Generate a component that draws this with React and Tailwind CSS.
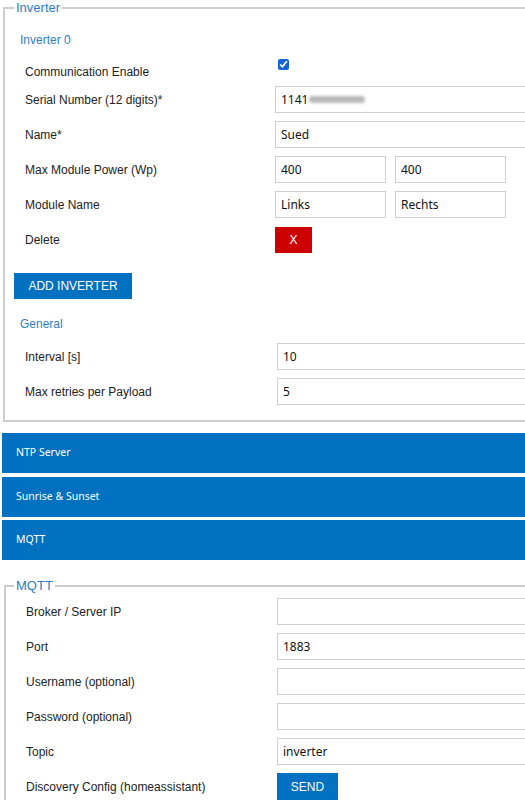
import React from "react";

const LABEL = "font-['Liberation_Sans',Arial,sans-serif] text-[12px] text-[#222]";
const INPUT =
  "h-[27px] border border-[#cfcfcf] bg-white pl-[5px] font-['Noto_Sans',sans-serif] text-[12px] text-[#111] flex items-center";

function Row({ label, children, labelW = "w-[270px]" }) {
  return (
    <div className="flex h-[35px] items-center">
      <div className={`${labelW} shrink-0 pl-[20px] ${LABEL}`}>{label}</div>
      {children}
    </div>
  );
}

function Field({ value, w = "w-[300px]" }) {
  return <div className={`${INPUT} ${w}`}>{value}</div>;
}

function Bar({ title, first }) {
  return (
    <div
      className={`${first ? "" : "mt-[3.5px]"} ml-[2px] flex h-[40px] w-[560px] items-center bg-[#0070c0] pl-[14px] font-['Noto_Sans',sans-serif] text-[10.5px] text-white`}
    >
      {title}
    </div>
  );
}

export default function App() {
  return (
    <div className="h-[800px] w-[525px] overflow-hidden bg-white">
      <fieldset className="ml-[3px] w-[560px] border-2 border-[#cdcdcd] pb-[11px]">
        <legend className="ml-[9px] px-[2px] font-['Liberation_Sans',Arial,sans-serif] text-[13px] leading-[16px] text-[#2b7cc0]">
          Inverter
        </legend>
        <div className="pl-[15px] pt-[17px] font-['Liberation_Sans',Arial,sans-serif] text-[12px] leading-[14px] text-[#2f80c4]">
          Inverter 0
        </div>
        <div className="flex h-[35px] items-center">
          <div className={`w-[270px] shrink-0 translate-y-[7px] pl-[20px] ${LABEL}`}>
            Communication Enable
          </div>
          <input
            type="checkbox"
            defaultChecked
            className="ml-[3px] h-[11px] w-[11px] accent-[#1565d8]"
          />
        </div>
        <Row label="Serial Number (12 digits)*">
          <div className={`${INPUT} w-[300px]`}>
            <span>1141</span>
            <span className="ml-[1px] inline-block h-[7px] w-[56px] rounded-full bg-[#b8b8b8] blur-[1.5px]" />
          </div>
        </Row>
        <Row label="Name*">
          <Field value="Sued" />
        </Row>
        <Row label="Max Module Power (Wp)">
          <div className="flex gap-[9px]">
            <Field value="400" w="w-[111px]" />
            <Field value="400" w="w-[111px]" />
          </div>
        </Row>
        <Row label="Module Name">
          <div className="flex gap-[9px]">
            <Field value="Links" w="w-[111px]" />
            <Field value="Rechts" w="w-[111px]" />
          </div>
        </Row>
        <Row label="Delete">
          <button className="flex h-[26px] w-[37px] items-center justify-center bg-[#cc0000] font-['Liberation_Sans',Arial,sans-serif] text-[12px] text-white">
            X
          </button>
        </Row>
        <button className="ml-[9px] mt-[16px] flex h-[26px] w-[118px] items-center justify-center bg-[#0070c0] font-['Liberation_Sans',Arial,sans-serif] text-[12px] text-white">
          ADD INVERTER
        </button>
        <div className="mt-[18px] pl-[15px] font-['Liberation_Sans',Arial,sans-serif] text-[12px] leading-[15px] text-[#2f80c4]">
          General
        </div>
        <div className="mt-[7px]">
          <Row label="Interval [s]" labelW="w-[272px]">
            <Field value="10" />
          </Row>
          <Row label="Max retries per Payload" labelW="w-[272px]">
            <Field value="5" />
          </Row>
        </div>
      </fieldset>

      <div className="mt-[11px]">
        <Bar title="NTP Server" first />
        <Bar title="Sunrise & Sunset" />
        <Bar title="MQTT" />
      </div>

      <fieldset className="ml-[4px] mt-[18px] w-[560px] border-2 border-[#cdcdcd]">
        <legend className="ml-[8px] px-[2px] font-['Liberation_Sans',Arial,sans-serif] text-[13px] leading-[16px] text-[#2b7cc0]">
          MQTT
        </legend>
        <div>
          <Row label="Broker / Server IP" labelW="w-[271px]">
            <Field value="" />
          </Row>
          <Row label="Port" labelW="w-[271px]">
            <Field value="1883" />
          </Row>
          <Row label="Username (optional)" labelW="w-[271px]">
            <Field value="" />
          </Row>
          <Row label="Password (optional)" labelW="w-[271px]">
            <Field value="" />
          </Row>
          <Row label="Topic" labelW="w-[271px]">
            <Field value="inverter" />
          </Row>
          <Row label="Discovery Config (homeassistant)" labelW="w-[271px]">
            <button className="flex h-[27px] w-[61px] items-center justify-center bg-[#0070c0] font-['Liberation_Sans',Arial,sans-serif] text-[12px] text-white">
              SEND
            </button>
          </Row>
        </div>
      </fieldset>
    </div>
  );
}
